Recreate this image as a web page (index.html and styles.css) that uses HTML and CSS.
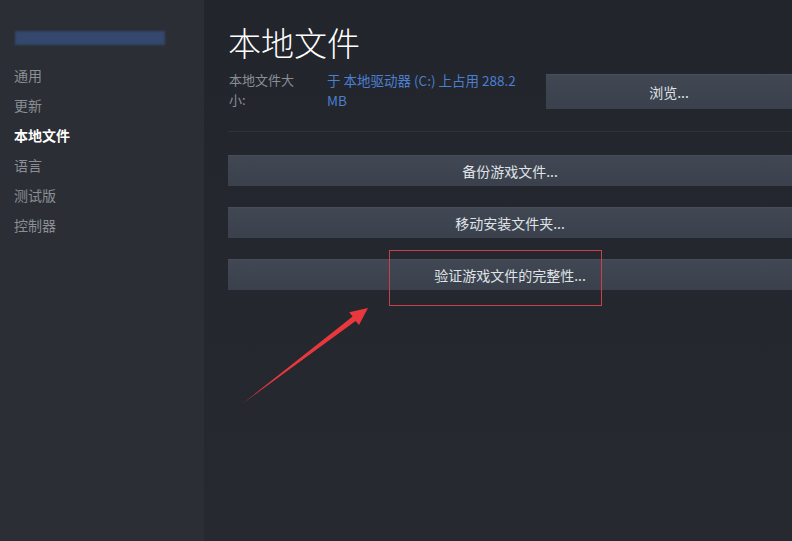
FILE: index.html
```html
<!doctype html>
<html>
    <head>
        <title>属性 - 本地文件</title>
        <link rel="stylesheet" href="styles.css">
    </head>
    <body>
        <div class="sidebar">
            <div class="game-name"></div>
            <ul class="nav">
                <li>通用</li>
                <li>更新</li>
                <li class="active">本地文件</li>
                <li>语言</li>
                <li>测试版</li>
                <li>控制器</li>
            </ul>
        </div>

        <div class="main">
            <h1>本地文件</h1>

            <div class="size-row">
                <div class="size-label">本地文件大小:</div>
                <div class="size-value">于 本地驱动器 (C:) 上占用 288.2 MB</div>
                <button class="btn browse">浏览...</button>
            </div>

            <div class="actions">
                <button class="btn">备份游戏文件...</button>
                <button class="btn">移动安装文件夹...</button>
                <button class="btn">验证游戏文件的完整性...</button>
            </div>
        </div>

        <!-- annotation drawn over the page -->
        <div class="mark-box"></div>
        <svg class="mark-arrow" viewBox="0 0 792 541" width="792" height="541">
            <polygon
                points="242,404 352.6,316.6 349.2,312.2 368,308 359,325 355.6,320.9"
                fill="#e8383d"
            />
        </svg>
    </body>
</html>
```

FILE: styles.css
```css
html,
body {
    margin: 0;
    height: 100%;
}
body {
    position: relative;
    display: flex;
    overflow: hidden;
    background: #24272e;
    font-family: "Noto Sans CJK SC", "Noto Sans", sans-serif;
}
.sidebar {
    width: 204px;
    flex: none;
    background: #2b2e34;
    padding-top: 31px;
    box-sizing: border-box;
}
.game-name {
    margin-left: 15px;
    width: 150px;
    height: 14px;
    background: #33486c;
    filter: blur(1px);
}
.nav {
    list-style: none;
    margin: 15px 0 0;
    padding: 0 0 0 14px;
}
.nav li {
    font-size: 14px;
    line-height: 30px;
    color: #8a8e95;
}
.nav li.active {
    color: #ffffff;
    font-weight: bold;
}
.main {
    flex: 1;
    padding: 22px 0 0 24px;
    background: linear-gradient(#22252c, #262930);
}
h1 {
    margin: 0;
    font-size: 33px;
    font-weight: 300;
    line-height: 40px;
    color: #ffffff;
}
.size-row {
    display: flex;
    align-items: flex-start;
    margin-top: 8px;
    padding-bottom: 21px;
    border-bottom: 1px solid #2f333b;
}
.size-label {
    width: 72px;
    padding-left: 1px;
    font-size: 13px;
    line-height: 20px;
    color: #8a8e95;
}
.size-value {
    width: 200px;
    margin-left: 26px;
    margin-right: 10px;
    font-size: 13.5px;
    line-height: 20px;
    color: #4b7fd0;
}
.btn {
    display: block;
    border: none;
    background: linear-gradient(#414753, #3b414c);
    box-shadow: inset 0 1px 0 #474e5a;
    color: #dfe2e6;
    font-family: inherit;
    font-size: 14px;
    height: 31px;
    padding: 0;
    cursor: pointer;
}
.browse {
    flex: 1;
    margin-left: 9px;
    margin-top: 4px;
    height: 35px;
}
.actions {
    display: flex;
    flex-direction: column;
    gap: 21px;
    margin-top: 23px;
}
.actions .btn {
    width: 100%;
}
.mark-box {
    position: absolute;
    left: 389px;
    top: 250px;
    width: 211px;
    height: 54px;
    border: 1px solid #c8404c;
}
.mark-arrow {
    position: absolute;
    left: 0;
    top: 0;
    pointer-events: none;
}
```
